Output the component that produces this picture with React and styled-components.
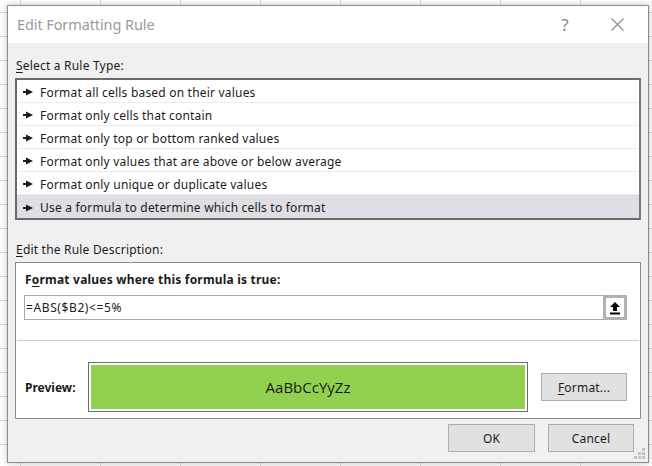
import React from 'react';
import styled, { createGlobalStyle } from 'styled-components';

const GlobalStyle = createGlobalStyle`
  html, body {
    margin: 0;
    padding: 0;
  }
  body {
    width: 652px;
    height: 466px;
    overflow: hidden;
    background-color: #fff;
    background-image:
      linear-gradient(to right, #d9d9d9 1px, transparent 1px),
      linear-gradient(to bottom, #d9d9d9 1px, transparent 1px);
    background-size: 80px 24px;
    background-position: 20px 12px;
    font-family: "Noto Sans", "Open Sans", sans-serif;
    color: #1b1b1b;
  }
`

const Page = styled.div`
  padding: 5px 4px 4px 7px;
`

const Dialog = styled.div`
  position: relative;
  width: 642px;
  height: 458px;
  box-sizing: border-box;
  border: 1px solid #8d8d8d;
  background: #f0f0f0;
  box-shadow: 0 0 6px rgba(0, 0, 0, 0.25);
  display: flex;
  flex-direction: column;
`

const TitleBar = styled.div`
  height: 37px;
  background: #fff;
  display: flex;
  align-items: center;
  padding-left: 9px;
`

const Title = styled.div`
  flex: 1;
  font-size: 14.5px;
  color: #9a9a9a;
  letter-spacing: -0.1px;
  padding-top: 0;
  margin-top: -1px;
`

const TitleButton = styled.div`
  width: 34px;
  display: flex;
  justify-content: center;
  align-items: center;
  color: #8a8a8a;
  font-size: 17px;
  margin-right: ${p => p.$last ? '14px' : '18px'};
`

const Body = styled.div`
  padding: 13px 7px 0 7px;
  display: flex;
  flex-direction: column;
  letter-spacing: 0.2px;
`

const Label = styled.div`
  height: 20px;
  line-height: 20px;
  font-size: 12px;
  padding-left: 1px;
  margin-top: ${p => p.$top || 0}px;
`

const Key = styled.span`
  text-decoration: underline;
  text-underline-offset: 2px;
`

const RuleList = styled.div`
  margin-top: 2px;
  height: 142px;
  box-sizing: border-box;
  border: 2px solid #6a6a6a;
  border-right-color: #7a7a7a;
  background: #fff;
  display: flex;
  flex-direction: column;
`

const RuleRow = styled.div`
  height: 23px;
  box-sizing: border-box;
  border-bottom: 1px solid ${p => p.$selected ? '#dfdee4' : '#ececec'};
  background: ${p => p.$selected ? '#dfdee4' : '#fff'};
  display: flex;
  align-items: center;
  padding: 2px 0 0 6px;
  font-size: 12px;
  &:last-child {
    border-bottom: none;
  }
`

const Bullet = styled.svg`
  width: 10px;
  height: 8px;
  margin-right: 7px;
  flex-shrink: 0;
`

const DescBox = styled.div`
  margin-top: 2px;
  height: 157px;
  box-sizing: border-box;
  border: 1px solid #8c8c8c;
  background: #fff;
  display: flex;
  flex-direction: column;
`

const BoldLabel = styled.div`
  margin-top: 7px;
  padding-left: 9px;
  height: 20px;
  line-height: 20px;
  font-size: 12px;
  font-weight: 700;
`

const InputRow = styled.div`
  margin: 5px 13px 0 8px;
  display: flex;
  height: 25px;
`

const FormulaInput = styled.div`
  flex: 1;
  box-sizing: border-box;
  border: 1px solid #a9a9a9;
  border-right: none;
  display: flex;
  align-items: center;
  padding-left: 1px;
  font-size: 12px;
  letter-spacing: 0.6px;
`

const CollapseButton = styled.div`
  width: 24px;
  box-sizing: border-box;
  border: 3px solid #b1b1b1;
  background: #fff;
  display: flex;
  justify-content: center;
  align-items: center;
`

const Separator = styled.div`
  margin: 20px 1px 0 1px;
  height: 1px;
  background: #c9c9c9;
`

const PreviewRow = styled.div`
  margin-top: 21px;
  display: flex;
  align-items: center;
  padding-left: 9px;
`

const PreviewLabel = styled.div`
  width: 63px;
  font-size: 12px;
  font-weight: 700;
  letter-spacing: 0;
`

const PreviewBox = styled.div`
  width: 440px;
  height: 50px;
  box-sizing: border-box;
  border: 1px solid #6f6f6f;
  padding: 2px;
  background: #fff;
`

const PreviewFill = styled.div`
  height: 100%;
  background: #92d050;
  display: flex;
  justify-content: center;
  align-items: center;
  font-family: "Open Sans", "Noto Sans", sans-serif;
  font-size: 15px;
  letter-spacing: 0;
  color: #1a1a1a;
`

const Button = styled.div`
  width: ${p => p.$w || 87}px;
  height: ${p => p.$h || 28}px;
  box-sizing: border-box;
  border: 1px solid #adadad;
  background: #e1e1e1;
  display: flex;
  justify-content: center;
  align-items: center;
  font-size: 12px;
  color: #1b1b1b;
`

const FormatButton = styled(Button)`
  margin-left: 13px;
`

const Footer = styled.div`
  margin-top: 5px;
  padding-right: 7px;
  display: flex;
  justify-content: flex-end;
  gap: 13px;
`

const Grip = styled.svg`
  position: absolute;
  right: 2px;
  bottom: 2px;
  width: 12px;
  height: 12px;
`

const rules = [
  'Format all cells based on their values',
  'Format only cells that contain',
  'Format only top or bottom ranked values',
  'Format only values that are above or below average',
  'Format only unique or duplicate values',
  'Use a formula to determine which cells to format',
]

const RuleBullet = () => (
  <Bullet viewBox="0 0 10 8">
    <rect x="0" y="3" width="4" height="2" fill="#1b1b1b" />
    <polygon points="3,0.5 10,4 3,7.5" fill="#1b1b1b" />
  </Bullet>
)

const App = () => {
  return (
    <Page>
      <GlobalStyle />
      <Dialog>
        <TitleBar>
          <Title>Edit Formatting Rule</Title>
          <TitleButton>?</TitleButton>
          <TitleButton $last>
            <svg width="13" height="13" viewBox="0 0 13 13">
              <path d="M0.5 0.5 L12.5 12.5 M12.5 0.5 L0.5 12.5" stroke="#8a8a8a" strokeWidth="1.1" />
            </svg>
          </TitleButton>
        </TitleBar>
        <Body>
          <Label><Key>S</Key>elect a Rule Type:</Label>
          <RuleList>
            {rules.map((r, i) => (
              <RuleRow key={r} $selected={i === rules.length - 1}>
                <RuleBullet />
                {r}
              </RuleRow>
            ))}
          </RuleList>
          <Label $top={20}><Key>E</Key>dit the Rule Description:</Label>
          <DescBox>
            <BoldLabel>F<Key>o</Key>rmat values where this formula is true:</BoldLabel>
            <InputRow>
              <FormulaInput>=ABS($B2)&lt;=5%</FormulaInput>
              <CollapseButton>
                <svg width="12" height="14" viewBox="0 0 12 14">
                  <polygon points="6,1 11,6 8,6 8,10 4,10 4,6 1,6" fill="#000" />
                  <rect x="1" y="11.5" width="10" height="2" fill="#000" />
                </svg>
              </CollapseButton>
            </InputRow>
            <Separator />
            <PreviewRow>
              <PreviewLabel>Preview:</PreviewLabel>
              <PreviewBox>
                <PreviewFill>AaBbCcYyZz</PreviewFill>
              </PreviewBox>
              <FormatButton $w={86}><Key>F</Key>ormat...</FormatButton>
            </PreviewRow>
          </DescBox>
          <Footer>
            <Button $w={87}>OK</Button>
            <Button $w={86}>Cancel</Button>
          </Footer>
        </Body>
        <Grip viewBox="0 0 12 12">
          <rect x="8" y="0" width="3" height="3" fill="#c4c4c4" />
          <rect x="4" y="4" width="3" height="3" fill="#c4c4c4" />
          <rect x="8" y="4" width="3" height="3" fill="#c4c4c4" />
          <rect x="0" y="8" width="3" height="3" fill="#c4c4c4" />
          <rect x="4" y="8" width="3" height="3" fill="#c4c4c4" />
          <rect x="8" y="8" width="3" height="3" fill="#c4c4c4" />
        </Grip>
      </Dialog>
    </Page>
  );
}

export default App;
